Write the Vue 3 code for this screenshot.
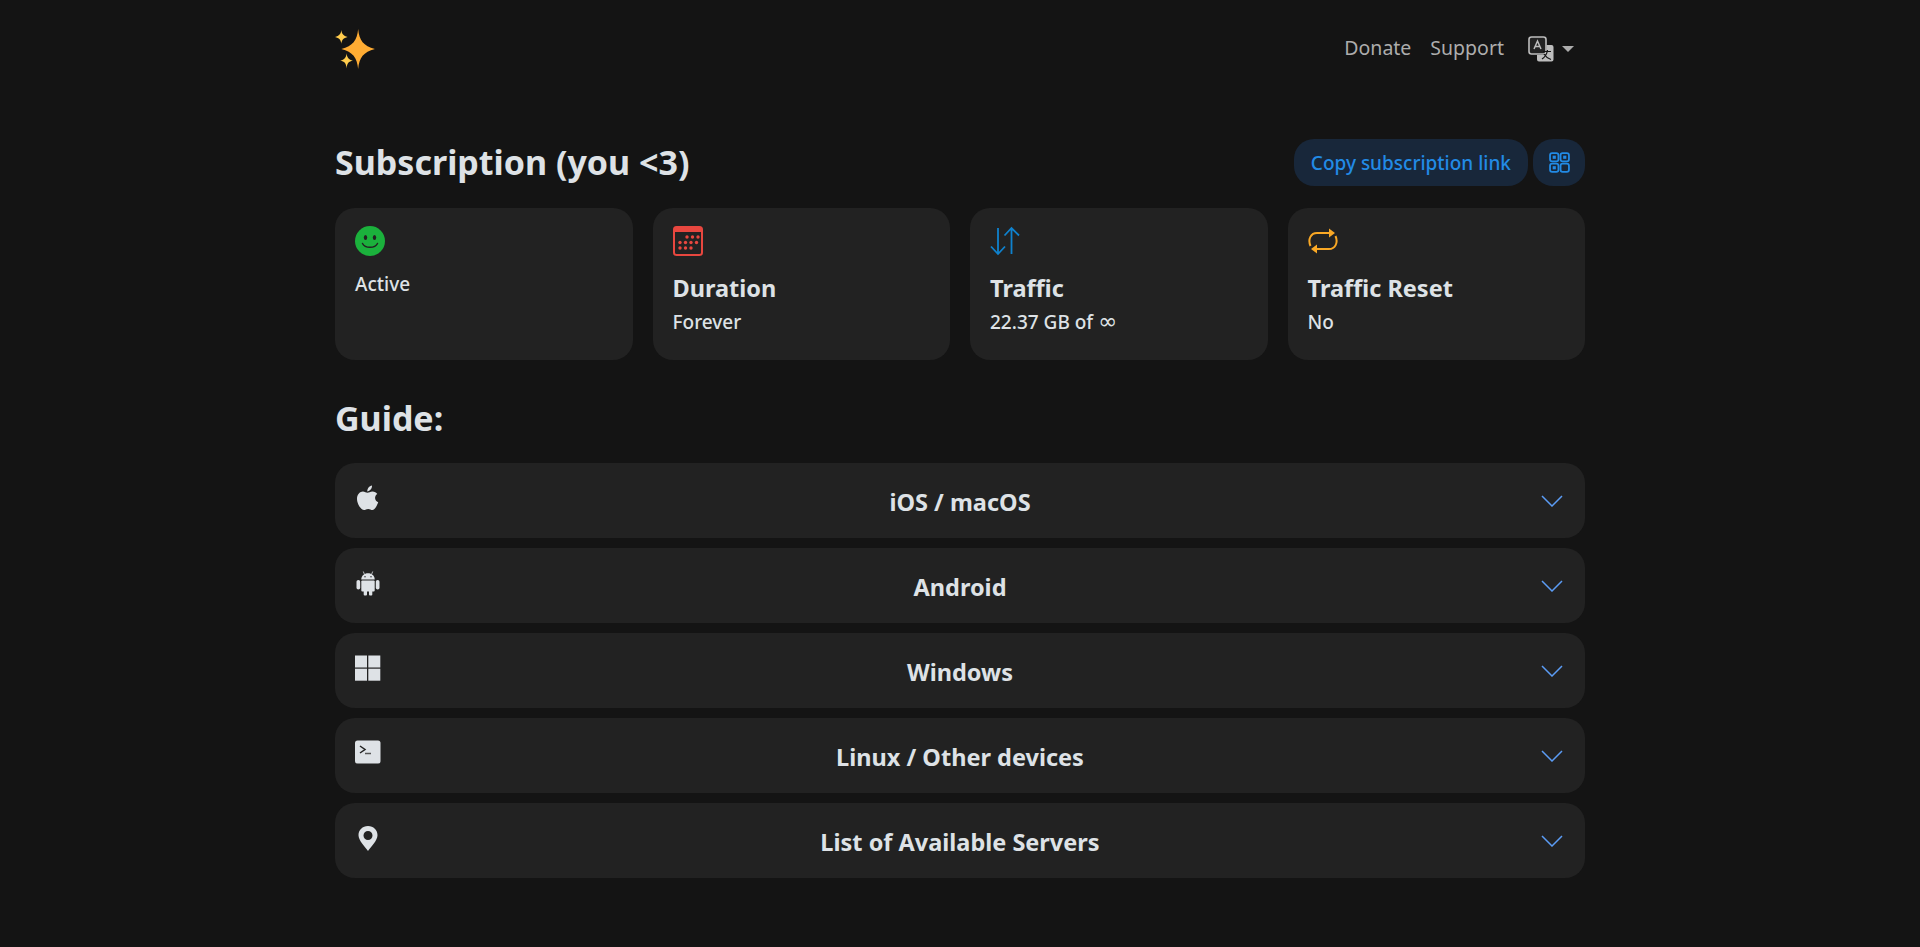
<template>
  <div class="page">
    <header class="topbar">
      <svg class="logo" viewBox="0 0 40 40" width="42" height="42">
        <path d="M23 1 C24 12 28 17 39 20 C28 23 24 28 23 39 C22 28 18 23 7 20 C18 17 22 12 23 1 Z" fill="#ffac33" />
        <path d="M7 2 C7.500 6 9 7.500 13 8.500 C9 9.500 7.500 11 7 15 C6.500 11 5 9.500 1 8.500 C5 7.500 6.500 6 7 2 Z" fill="#ffcc4d" />
        <path d="M12 24 C12.500 28.500 14 30 18 31 C14 32 12.500 33.500 12 38.500 C11.500 33.500 10 32 6 31 C10 30 11.500 28.500 12 24 Z" fill="#ffcc4d" />
      </svg>
      <nav class="nav">
        <a class="nav__link">Donate</a>
        <a class="nav__link">Support</a>
        <span class="lang">
          <svg viewBox="0 0 26 26" width="26" height="26">
            <rect x="1" y="1" width="17" height="17" rx="2.500" fill="#222" stroke="#bdbdbd" stroke-width="1.600" />
            <path d="M6 13 L9.500 5 L13 13 M7.300 10.500 H11.700" fill="none" stroke="#bdbdbd" stroke-width="1.500" />
            <path d="M14 9 H23.500 Q25.500 9 25.500 11 V23.500 Q25.500 25.500 23.500 25.500 H11 Q9 25.500 9 23.500 V19 H16 Q18.500 19 18.500 16 V9 Z" fill="#bdbdbd" />
            <path d="M15 15.500 H23 M19.500 14 C19 18 17 21 14 23 M16 18 C17.500 20.500 20 22.500 23 23.500" fill="none" stroke="#141414" stroke-width="1.200" />
          </svg>
          <span class="caret"></span>
        </span>
      </nav>
    </header>

    <section class="title-row">
      <h2 class="heading">Subscription (you &lt;3)</h2>
      <div class="actions">
        <button class="btn">Copy subscription link</button>
        <button class="btn btn--icon" aria-label="QR code">
          <svg viewBox="0 0 20 20" width="21" height="21" fill="none" stroke="#228be6" stroke-width="1.700">
            <rect x="1" y="1" width="8" height="8" rx="2" />
            <rect x="11" y="1" width="8" height="8" rx="2" />
            <rect x="1" y="11" width="8" height="8" rx="2" />
            <rect x="11" y="11" width="8" height="8" rx="2" />
            <rect x="3.500" y="3.500" width="3" height="3" fill="#228be6" stroke="none" />
            <rect x="13.500" y="3.500" width="3" height="3" fill="#228be6" stroke="none" />
            <rect x="3.500" y="13.500" width="3" height="3" fill="#228be6" stroke="none" />
          </svg>
        </button>
      </div>
    </section>

    <section class="cards">
      <div class="card">
        <svg class="card__icon" viewBox="0 0 30 30">
          <circle cx="15" cy="15" r="15" fill="#1bb13c" />
          <ellipse cx="10.500" cy="11.500" rx="1.700" ry="2.500" fill="#222" />
          <ellipse cx="19.500" cy="11.500" rx="1.700" ry="2.500" fill="#222" />
          <path d="M7.500 17.500 C10 22.500 20 22.500 22.500 17.500" fill="none" stroke="#222" stroke-width="1.500" stroke-linecap="round" />
        </svg>
        <div class="card__text card__text--top">Active</div>
      </div>
      <div class="card">
        <svg class="card__icon" viewBox="0 0 30 30">
          <rect x="1" y="1" width="28" height="28" rx="2.500" fill="none" stroke="#e8473f" stroke-width="2" />
          <rect x="1" y="1" width="28" height="5" fill="#e8473f" />
          <g fill="#e8473f">
            <circle cx="14" cy="11" r="1.700" /><circle cx="19.500" cy="11" r="1.700" /><circle cx="25" cy="11" r="1.700" />
            <circle cx="7" cy="16.500" r="1.700" /><circle cx="12.500" cy="16.500" r="1.700" /><circle cx="18" cy="16.500" r="1.700" /><circle cx="23.500" cy="16.500" r="1.700" />
            <circle cx="7" cy="22" r="1.700" /><circle cx="12.500" cy="22" r="1.700" /><circle cx="18" cy="22" r="1.700" />
          </g>
        </svg>
        <div class="card__title">Duration</div>
        <div class="card__text">Forever</div>
      </div>
      <div class="card">
        <svg class="card__icon" viewBox="0 0 30 30" fill="none" stroke="#0f82ce" stroke-width="1.800">
          <path d="M8 2 V28 M1 20.500 L8 28 L15 20.500" />
          <path d="M21.500 28 V2 M14.500 9.500 L21.500 2 L29 9.500" />
        </svg>
        <div class="card__title">Traffic</div>
        <div class="card__text">22.37 GB of <span class="infinity">∞</span></div>
      </div>
      <div class="card">
        <svg class="card__icon" viewBox="0 0 30 30" fill="none" stroke="#f9a825" stroke-width="2">
          <path d="M2.500 20 C-0.500 13 3 7 9 7 H24" />
          <path d="M27.500 10 C30.500 17 27 23 21 23 H6" />
          <path d="M21 2.500 L27 7 L21 11.500 Z" fill="#f9a825" stroke="none" />
          <path d="M9 18.500 L3 23 L9 27.500 Z" fill="#f9a825" stroke="none" />
        </svg>
        <div class="card__title">Traffic Reset</div>
        <div class="card__text">No</div>
      </div>
    </section>

    <h2 class="heading heading--guide">Guide:</h2>

    <section class="guide">
      <div v-for="row in rows" :key="row.label" class="row">
        <svg class="row__icon" viewBox="0 0 26 26" v-html="row.icon"></svg>
        <span class="row__label">{{ row.label }}</span>
        <svg class="row__chevron" viewBox="0 0 22 12" width="22" height="12" fill="none" stroke="#5b9cf5" stroke-width="1.500">
          <path d="M1 1 L11 11 L21 1" />
        </svg>
      </div>
    </section>
  </div>
</template>

<script setup>
const rows = [
  {
    label: 'iOS / macOS',
    icon: '<path fill="#dee2e6" d="M17 0.500 C17.200 3.800 14.800 6.200 12.300 6.400 C12.100 3.700 14.300 1 17 0.500 Z M12.400 7.700 C13.800 7.700 15.300 6.400 17.500 6.400 C19.600 6.400 21.300 7.500 22.300 9 C18.900 11 19.600 15.900 23.200 17.200 C22.100 20.500 19.600 25 17.500 25 C15.900 25 15 23.900 13.200 23.900 C11.300 23.900 10.500 25 8.900 25 C6.200 25 2 19 2 14 C2 9.100 5.200 6.400 7.900 6.400 C9.800 6.400 11 7.700 12.400 7.700 Z"/>'
  },
  {
    label: 'Android',
    icon: '<g fill="#dee2e6"><path d="M6.300 9.500 C6.300 5.800 9.200 3.300 13 3.300 C16.800 3.300 19.700 5.800 19.700 9.500 Z"/><rect x="6.300" y="10.500" width="13.400" height="11" rx="1"/><rect x="1.500" y="10" width="3.700" height="9.500" rx="1.800"/><rect x="20.800" y="10" width="3.700" height="9.500" rx="1.800"/><rect x="8.700" y="20" width="3.300" height="5.500" rx="1"/><rect x="14" y="20" width="3.300" height="5.500" rx="1"/></g><path stroke="#dee2e6" stroke-width="0.800" d="M9.500 4.500 L8.300 1.500 M16.500 4.500 L17.700 1.500"/><circle cx="10" cy="6.800" r="0.700" fill="#222"/><circle cx="16" cy="6.800" r="0.700" fill="#222"/>'
  },
  {
    label: 'Windows',
    icon: '<g fill="#dee2e6"><rect x="0" y="0.500" width="12" height="12"/><rect x="13.300" y="0.500" width="12" height="12"/><rect x="0" y="13.700" width="12" height="12"/><rect x="13.300" y="13.700" width="12" height="12"/></g>'
  },
  {
    label: 'Linux / Other devices',
    icon: '<rect x="0" y="0.500" width="25.500" height="23" rx="2.500" fill="#dee2e6"/><path d="M5 6 L10 9.500 L5 13" fill="none" stroke="#222" stroke-width="1.500"/><path d="M10 13.500 H16" stroke="#555" stroke-width="1.500"/>'
  },
  {
    label: 'List of Available Servers',
    icon: '<path fill="#dee2e6" fill-rule="evenodd" d="M13 1 C18.500 1 22.500 5 22.500 10.200 C22.500 15.500 16 21.500 13 26 C10 21.500 3.500 15.500 3.500 10.200 C3.500 5 7.500 1 13 1 Z M13 6 A4.500 4.500 0 1 0 13 15 A4.500 4.500 0 1 0 13 6 Z"/>'
  }
]
</script>

<style>
html,
body {
  background: #141414;
}
</style>

<style scoped>
.page {
  width: 1250px;
  margin: 0 auto;
  padding-bottom: 70px;
  font-family: 'Noto Sans', 'Open Sans', sans-serif;
  color: #dee2e6;
}
.topbar {
  height: 98px;
  display: flex;
  align-items: center;
  justify-content: space-between;
}
.logo {
  display: block;
  margin-left: -1px;
}
.nav {
  display: flex;
  align-items: center;
  gap: 19px;
  padding-right: 11px;
  font-size: 19.5px;
  line-height: 24px;
  color: #adadad;
}
.nav__link {
  margin-top: -2px;
}
.lang {
  display: flex;
  align-items: center;
  gap: 8px;
  margin-left: 5px;
}
.caret {
  width: 0;
  height: 0;
  border-left: 6px solid transparent;
  border-right: 6px solid transparent;
  border-top: 6px solid #adadad;
}
.title-row {
  display: flex;
  align-items: center;
  justify-content: space-between;
  margin-top: 40px;
  margin-bottom: 22px;
}
.heading {
  margin: 0;
  font-size: 34px;
  line-height: 48px;
  font-weight: 700;
}
.actions {
  display: flex;
  gap: 5px;
}
.btn {
  height: 47px;
  padding: 1px 17px 0;
  border: 0;
  border-radius: 20px;
  background: #18273a;
  color: #228be6;
  font: 500 19px 'Noto Sans', sans-serif;
  display: flex;
  align-items: center;
}
.btn--icon {
  width: 52px;
  justify-content: center;
  padding: 0;
}
.cards {
  display: grid;
  grid-template-columns: repeat(4, 1fr);
  gap: 20px;
}
.card {
  height: 152px;
  box-sizing: border-box;
  padding: 18px 20px;
  background: #222;
  border-radius: 20px;
}
.card__icon {
  display: block;
  width: 30px;
  height: 30px;
}
.card__title {
  margin-top: 14px;
  font-size: 23.5px;
  line-height: 36px;
  font-weight: 700;
}
.card__text {
  margin-top: 3px;
  font-size: 19px;
  line-height: 27px;
  font-weight: 500;
}
.card__text--top {
  margin-top: 15px;
}
.infinity {
  font-family: 'DejaVu Sans', sans-serif;
  font-size: 1.2em;
  line-height: 1;
}
.heading--guide {
  margin-top: 34px;
  margin-bottom: 21px;
}
.guide {
  display: flex;
  flex-direction: column;
  gap: 10px;
}
.row {
  height: 75px;
  box-sizing: border-box;
  padding: 22px 20px;
  background: #222;
  border-radius: 20px;
  display: grid;
  grid-template-columns: 1fr auto 1fr;
  align-items: start;
}
.row__icon {
  width: 26px;
  height: 26px;
  display: block;
}
.row__label {
  font-size: 23.5px;
  line-height: 36px;
  font-weight: 700;
  margin-top: -1px;
}
.row__chevron {
  justify-self: end;
  margin-top: 10px;
  margin-right: 2px;
}
</style>
